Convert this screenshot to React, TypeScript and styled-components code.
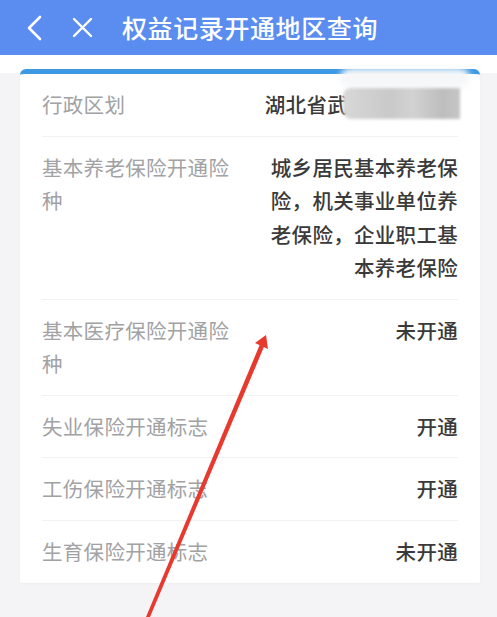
import React from "react";
import styled, { createGlobalStyle } from "styled-components";

const GlobalStyle = createGlobalStyle`
  html, body {
    margin: 0;
    padding: 0;
    background: #f4f4f6;
  }
  body {
    font-family: "Noto Sans CJK SC", "Noto Sans", sans-serif;
  }
`;

const Page = styled.div`
  position: relative;
  width: 497px;
  height: 617px;
  overflow: hidden;
  background: #f4f4f6;
`;

const Header = styled.div`
  display: flex;
  align-items: center;
  height: 55px;
  padding-left: 26px;
  background: #5a8def;
  color: #fff;
`;

const IconButton = styled.span<{ $w: number }>`
  display: flex;
  align-items: center;
  width: ${(p) => p.$w}px;
  height: 30px;
`;

const Title = styled.h1`
  margin: 0;
  font-size: 25px;
  font-weight: 500;
  letter-spacing: 0.6px;
  line-height: 1;
`;

const Body = styled.div`
  padding: 14px 17px 0 20px;
  background: linear-gradient(#ffffff 0 18px, #f4f4f6 18px);
`;

const Card = styled.div`
  background: #fff;
  border-top: 5px solid #3d99e2;
  border-radius: 6px 6px 2px 2px;
  padding: 0 22px;
  box-shadow: 0 1px 3px rgba(0, 0, 0, 0.03);
`;

const Row = styled.div<{ $last?: boolean }>`
  display: flex;
  justify-content: space-between;
  align-items: flex-start;
  padding: 14px 0;
  border-bottom: 1px solid ${(p) => (p.$last ? "transparent" : "#f2f2f4")};
  font-size: 20.5px;
  line-height: 33.5px;
  letter-spacing: 0.3px;
`;

const Label = styled.div`
  flex: 0 0 200px;
  color: #a2a2a4;
`;

const Value = styled.div`
  position: relative;
  flex: 0 0 194px;
  text-align: right;
  color: #3a3a3a;
  font-weight: 500;
`;

const Region = styled.span`
  display: inline-block;
  white-space: nowrap;
  margin-right: 110px;
`;

const Redact = styled.span`
  position: absolute;
  right: -2px;
  top: 0;
  width: 117px;
  height: 31px;
  border-radius: 8px 0 0 8px;
  background: linear-gradient(90deg, #d8d8d8, #c9c9c9 40%, #d2d2d2 60%, #bdbdbd 85%, #c6c6c6);
  filter: blur(1.5px);
`;

const RedactGlow = styled.span`
  position: absolute;
  right: -12px;
  top: -20px;
  width: 130px;
  height: 20px;
  border-radius: 10px;
  background: #f6f7f9;
  filter: blur(3px);
`;

const Arrow = styled.svg`
  position: absolute;
  left: 0;
  top: 0;
  pointer-events: none;
`;

const rows: { label: string; value: string }[] = [
  { label: "基本养老保险开通险种", value: "城乡居民基本养老保险，机关事业单位养老保险，企业职工基本养老保险" },
  { label: "基本医疗保险开通险种", value: "未开通" },
  { label: "失业保险开通标志", value: "开通" },
  { label: "工伤保险开通标志", value: "开通" },
  { label: "生育保险开通标志", value: "未开通" },
];

export default function App() {
  return (
    <Page>
      <GlobalStyle />
      <Header>
        <IconButton $w={46}>
          <svg width="17" height="26" viewBox="0 0 17 26" fill="none" stroke="#fff" strokeWidth="2.6" strokeLinecap="round" strokeLinejoin="round">
            <path d="M14 2L3 13l11 11" />
          </svg>
        </IconButton>
        <IconButton $w={50}>
          <svg width="21" height="21" viewBox="0 0 21 21" fill="none" stroke="#fff" strokeWidth="2.4" strokeLinecap="round">
            <path d="M2 2l17 17M19 2L2 19" />
          </svg>
        </IconButton>
        <Title>权益记录开通地区查询</Title>
      </Header>
      <Body>
        <Card>
          <Row>
            <Label>行政区划</Label>
            <Value>
              <Region>湖北省武</Region>
              <RedactGlow />
              <Redact />
            </Value>
          </Row>
          {rows.map((r, i) => (
            <Row key={r.label} $last={i === rows.length - 1}>
              <Label>{r.label}</Label>
              <Value>{r.value}</Value>
            </Row>
          ))}
        </Card>
      </Body>
      <Arrow width="497" height="617" viewBox="0 0 497 617">
        <polygon points="260.5,343 264.5,345.5 150,617 146,617" fill="#e8392f" />
        <polygon points="266,335 255,343 268,349" fill="#e8392f" />
      </Arrow>
    </Page>
  );
}
